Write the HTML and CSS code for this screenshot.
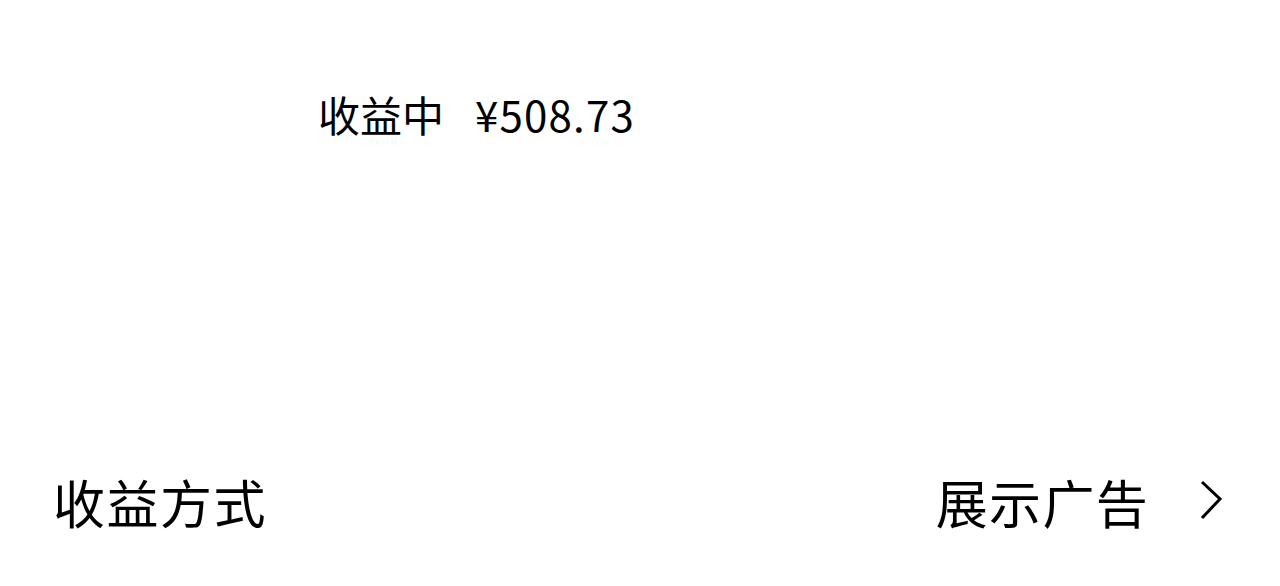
FILE: index.html
```html
<!DOCTYPE html>
<html lang="zh-CN">
<head>
<meta charset="utf-8">
<link rel="stylesheet" href="styles.css">
</head>
<body>
<div class="page">
  <div class="earning">
    <span class="label">收益中</span>
    <span class="amount">¥508.73</span>
  </div>
  <div class="row">
    <span class="row-title">收益方式</span>
    <div class="row-value">
      <span>展示广告</span>
      <svg class="chev" width="22" height="40" viewBox="0 0 22 40"><path d="M2 2 L20 19 L2 38" fill="none" stroke="#000" stroke-width="3"/></svg>
    </div>
  </div>
</div>
</body>
</html>
```
FILE: styles.css
```css
html, body { margin: 0; padding: 0; background: #fff; }
.page {
  width: 1280px; height: 586px;
  display: flex; flex-direction: column;
  font-family: "Noto Sans CJK SC", sans-serif;
  color: #000;
}
.earning {
  padding: 85px 0 0 318px;
  font-size: 42px;
  line-height: 58px;
  display: flex; gap: 31px;
}
.amount { letter-spacing: 1.2px; }
.row {
  margin-top: auto;
  padding: 0 58px 48px 55px;
  display: flex; justify-content: space-between; align-items: center;
  font-size: 52px; line-height: 72px;
}
.row-title { margin-left: -2px; letter-spacing: 1.5px; }
.row-value { display: flex; align-items: center; gap: 51px; }
.row-value span { letter-spacing: 1.3px; }
.chev { display: block; margin-top: -4px; }
```
